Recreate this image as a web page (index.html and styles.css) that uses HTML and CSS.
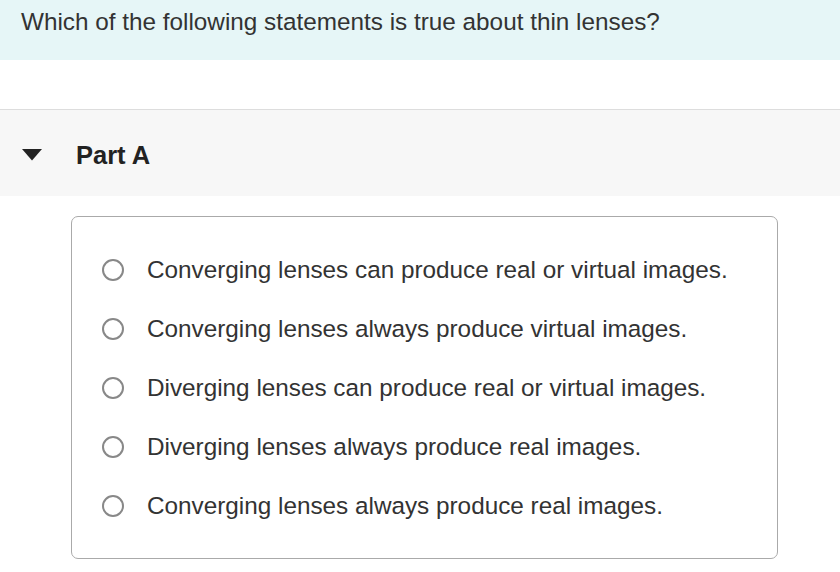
FILE: index.html
```html
<!DOCTYPE html>
<html>
<head>
<meta charset="utf-8">
<link rel="stylesheet" href="styles.css">
</head>
<body>
<div class="question">Which of the following statements is true about thin lenses?</div>
<div class="part-head">
  <svg class="caret" width="20" height="12" viewBox="0 0 20 12"><polygon points="0,0 20,0 10,11.5" fill="#222"/></svg>
  <span class="part-title">Part A</span>
</div>
<div class="choices">
  <label class="choice"><span class="radio"></span><span class="choice-text">Converging lenses can produce real or virtual images.</span></label>
  <label class="choice"><span class="radio"></span><span class="choice-text">Converging lenses always produce virtual images.</span></label>
  <label class="choice"><span class="radio"></span><span class="choice-text">Diverging lenses can produce real or virtual images.</span></label>
  <label class="choice"><span class="radio"></span><span class="choice-text">Diverging lenses always produce real images.</span></label>
  <label class="choice"><span class="radio"></span><span class="choice-text">Converging lenses always produce real images.</span></label>
</div>
</body>
</html>
```
FILE: styles.css
```css
html, body {
  margin: 0;
  padding: 0;
  background: #fff;
}
body {
  font-family: "Liberation Sans", Arial, sans-serif;
  color: #333;
  width: 840px;
}
.question {
  box-sizing: border-box;
  height: 60px;
  background: #e6f6f7;
  padding: 8px 21px 0;
  font-size: 24.3px;
  line-height: 28px;
  color: #333;
}
.part-head {
  box-sizing: border-box;
  margin-top: 49px;
  height: 87px;
  border-top: 1px solid #dddddd;
  background: #f7f7f7;
  display: flex;
  align-items: center;
  padding-left: 22px;
  padding-top: 3px;
}
.caret {
  display: block;
  margin-right: 34px;
}
.part-title {
  font-size: 25.5px;
  font-weight: bold;
  line-height: 28px;
  color: #222;
}
.choices {
  box-sizing: border-box;
  margin: 20px 0 0 71px;
  width: 707px;
  height: 343px;
  border: 1px solid #aaaaaa;
  border-radius: 7px;
  padding: 23px 0 0 30px;
  display: flex;
  flex-direction: column;
}
.choice {
  height: 59px;
  display: flex;
  align-items: center;
  gap: 23px;
}
.radio {
  box-sizing: border-box;
  width: 22px;
  height: 22px;
  border: 2px solid #888;
  border-radius: 50%;
  flex: none;
}
.choice-text {
  font-size: 24.3px;
  line-height: 28px;
  color: #333;
}
```
